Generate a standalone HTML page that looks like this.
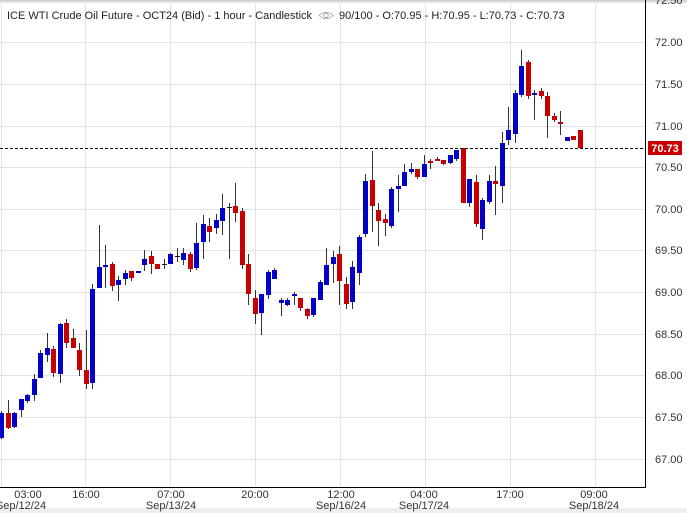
<!DOCTYPE html>
<html><head><meta charset="utf-8">
<style>
html,body{margin:0;padding:0;background:#fff;width:687px;height:513px;overflow:hidden;font-family:"Liberation Sans",Arial,sans-serif;}
svg{position:absolute;left:0;top:0;}
</style></head>
<body>
<svg id="c" width="687" height="513" xmlns="http://www.w3.org/2000/svg" font-family="Liberation Sans, Arial, sans-serif">
<defs><linearGradient id="sh" x1="0" y1="0" x2="0" y2="1"><stop offset="0" stop-color="#c8c8c8"/><stop offset="1" stop-color="#ffffff"/></linearGradient></defs>
<g stroke="#e3e3e3" stroke-width="1">
<line x1="0" y1="42.5" x2="645" y2="42.5"/><line x1="0" y1="84.5" x2="645" y2="84.5"/><line x1="0" y1="126.5" x2="645" y2="126.5"/><line x1="0" y1="167.5" x2="645" y2="167.5"/><line x1="0" y1="209.5" x2="645" y2="209.5"/><line x1="0" y1="250.5" x2="645" y2="250.5"/><line x1="0" y1="292.5" x2="645" y2="292.5"/><line x1="0" y1="334.5" x2="645" y2="334.5"/><line x1="0" y1="375.5" x2="645" y2="375.5"/><line x1="0" y1="417.5" x2="645" y2="417.5"/><line x1="0" y1="459.5" x2="645" y2="459.5"/>
<line x1="1.5" y1="0" x2="1.5" y2="487"/><line x1="85.5" y1="0" x2="85.5" y2="487"/><line x1="170.5" y1="0" x2="170.5" y2="487"/><line x1="255.5" y1="0" x2="255.5" y2="487"/><line x1="340.5" y1="0" x2="340.5" y2="487"/><line x1="425.5" y1="0" x2="425.5" y2="487"/><line x1="510.5" y1="0" x2="510.5" y2="487"/><line x1="595.5" y1="0" x2="595.5" y2="487"/>
</g>
<rect x="0" y="0" width="687" height="4" fill="url(#sh)"/>
<g id="candles"></g>
<line x1="0" y1="148.5" x2="645" y2="148.5" stroke="#000" stroke-dasharray="3,2"/>
<line x1="645.5" y1="0" x2="645.5" y2="487" stroke="#000"/>
<line x1="0" y1="487.5" x2="646" y2="487.5" stroke="#000"/>
<rect x="0" y="508" width="687" height="5" fill="#eeeeee"/>
<rect x="648" y="141" width="34" height="14" fill="#c80000"/>
<text x="665" y="152" font-size="11" font-weight="bold" fill="#fff" text-anchor="middle">70.73</text>
<g font-size="11" fill="#333">
<text x="655" y="4">72.50</text>
<text x="655" y="46">72.00</text><text x="655" y="88">71.50</text><text x="655" y="130">71.00</text><text x="655" y="171">70.50</text><text x="655" y="213">70.00</text><text x="655" y="254">69.50</text><text x="655" y="296">69.00</text><text x="655" y="338">68.50</text><text x="655" y="379">68.00</text><text x="655" y="421">67.50</text><text x="655" y="463">67.00</text><text x="655" y="500">66.50</text>
</g>
<rect x="648" y="489" width="39" height="19" fill="#fff"/>
<text x="655" y="500" font-size="11" fill="#333" clip-path="inset(0 0 6px 0)"></text>
<g font-size="11" fill="#333" text-anchor="middle">
<text x="28" y="498">03:00</text><text x="21" y="509">Sep/12/24</text>
<text x="86" y="498">16:00</text>
<text x="171" y="498">07:00</text><text x="171" y="509">Sep/13/24</text>
<text x="255" y="498">20:00</text>
<text x="341" y="498">12:00</text><text x="341" y="509">Sep/16/24</text>
<text x="424" y="498">04:00</text><text x="424" y="509">Sep/17/24</text>
<text x="510" y="498">17:00</text>
<text x="594" y="498">09:00</text><text x="594" y="509">Sep/18/24</text>
</g>
<text x="7" y="19" font-size="11" fill="#222">ICE WTI Crude Oil Future - OCT24 (Bid) - 1 hour - Candlestick</text>
<g stroke="#999" fill="none" stroke-width="0.8"><path d="M319 15.5 Q326 9 333 15.5 Q326 22 319 15.5Z"/><circle cx="326" cy="15.5" r="2.2"/></g>
<text x="339" y="19" font-size="11" fill="#222">90/100 - O:70.95 - H:70.95 - L:70.73 - C:70.73</text>
</svg>
<script>
var d=[[413,438,411,439,'B'],[413,428,400,429,'R'],[413,427,412,428,'B'],[399,410,399,417,'B'],[395,401,394,403,'B'],[379,395,374,401,'B'],[353,378,350,378,'B'],[348,355,333,362,'B'],[349,373,346,377,'R'],[324,374,323,383,'B'],[323,343,319,348,'R'],[338,348,329,348,'R'],[350,370,343,376,'R'],[370,384,330,389,'R'],[289,383,284,389,'B'],[267,288,225,288,'B'],[265,266,245,288,'B'],[264,286,262,291,'R'],[280,285,276,301,'B'],[273,279,270,285,'B'],[271,278,271,281,'R'],[271,272,271,272,'B'],[259,265,250,271,'B'],[256,264,251,274,'R'],[264,269,264,269,'R'],[264,265,259,269,'K'],[254,264,253,264,'B'],[256,257,248,262,'K'],[253,260,248,265,'B'],[254,269,252,272,'R'],[243,268,223,270,'B'],[224,242,215,259,'B'],[226,232,218,242,'R'],[220,228,214,234,'B'],[208,221,194,235,'B'],[207,208,203,259,'K'],[206,213,183,222,'R'],[211,265,208,269,'R'],[264,294,254,305,'R'],[298,314,290,324,'R'],[294,313,294,335,'B'],[272,295,270,299,'B'],[270,279,268,279,'B'],[300,303,298,316,'B'],[300,305,298,306,'B'],[294,296,292,305,'B'],[298,308,298,311,'R'],[309,316,308,319,'R'],[298,315,298,317,'B'],[282,300,280,300,'B'],[265,285,248,285,'B'],[257,264,251,283,'B'],[254,281,246,305,'R'],[284,304,277,309,'R'],[267,302,261,309,'B'],[237,273,235,285,'B'],[181,234,174,237,'B'],[180,206,151,232,'R'],[210,221,203,246,'R'],[219,223,214,236,'R'],[189,226,187,228,'B'],[186,189,175,212,'B'],[172,186,164,186,'B'],[169,172,163,174,'B'],[169,177,169,179,'R'],[164,177,155,177,'B'],[161,163,159,169,'R'],[159,160,157,161,'R'],[160,164,160,165,'R'],[155,163,155,164,'B'],[150,159,150,161,'B'],[148,203,148,203,'R'],[179,203,179,207,'B'],[182,224,175,227,'R'],[200,229,198,240,'B'],[181,202,175,204,'B'],[181,184,166,215,'R'],[143,186,132,203,'B'],[130,140,107,145,'B'],[93,134,90,143,'B'],[66,95,50,97,'B'],[62,96,60,99,'R'],[93,95,90,120,'B'],[91,96,88,99,'R'],[96,116,92,138,'R'],[116,120,113,122,'R'],[122,124,111,135,'R'],[137,141,137,141,'B'],[136,140,136,140,'R'],[130,148,130,148,'R']];
var col={B:'#0000c8',R:'#c80000',K:'#111'};
var s='';
for(var i=0;i<d.length;i++){var c=d[i];var x=Math.round(1+i*6.5);
s+='<line x1="'+(x+0.5)+'" y1="'+c[2]+'" x2="'+(x+0.5)+'" y2="'+c[3]+'" stroke="#333" stroke-width="1"/>';
var h=Math.max(c[1]-c[0],c[4]=='K'?1:2);
s+='<rect x="'+(x-2)+'" y="'+c[0]+'" width="5" height="'+h+'" fill="'+col[c[4]]+'"/>';}
document.getElementById('candles').innerHTML=s;
</script>
</body></html>
